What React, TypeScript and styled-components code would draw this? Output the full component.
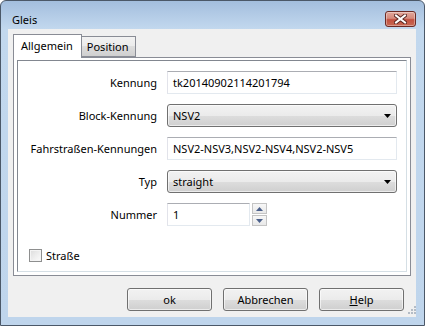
import { Fragment } from "react";
import styled, { createGlobalStyle } from "styled-components";

const GlobalStyle = createGlobalStyle`
body {
  margin: 0;
  background: #ffffff;
  font-family: "Noto Sans", "Open Sans", sans-serif;
  font-size: 11px;
  color: #000;
}
`;

const Window = styled.div`
display: flex;
flex-direction: column;
box-sizing: border-box;
width: 425px;
height: 326px;
border: 1px solid #4b5868;
border-radius: 6px 6px 0 0;
background: linear-gradient(to bottom, #a3bedd 0px, #b3cbe6 14px, #c2d8ee 28px, #bfd5ec 100%);
`;

const TitleBar = styled.div`
display: flex;
align-items: center;
justify-content: space-between;
box-sizing: border-box;
height: 28px;
padding: 9px 8px 0 11px;
`;

const Title = styled.span`
font-size: 11px;
line-height: 16px;
`;

const CloseButton = styled.div`
display: flex;
align-items: center;
justify-content: center;
box-sizing: border-box;
width: 31px;
height: 16px;
margin-top: -2px;
border: 1px solid #6c2a24;
border-radius: 3px;
background: linear-gradient(to bottom, #e2a89c 0%, #d58a7c 45%, #c2503f 55%, #c86a55 100%);
box-shadow: inset 0 0 0 1px rgba(255, 255, 255, 0.35);
`;

const Client = styled.div`
position: relative;
display: flex;
flex-direction: column;
box-sizing: border-box;
height: 288px;
margin: 0 8px 0 7px;
padding: 5px 4px 0 5px;
background: #f0f0f0;
`;

const TabStrip = styled.div`
display: flex;
align-items: flex-end;
height: 23px;
`;

const Tab = styled.div<{ $active?: boolean }>`
position: relative;
z-index: 1;
display: flex;
align-items: center;
box-sizing: border-box;
height: ${(p) => (p.$active ? "24px" : "21px")};
margin-bottom: ${(p) => (p.$active ? "-1px" : "0")};
padding: ${(p) => (p.$active ? "0 8px 2px 7px" : "0 6px 0 5px")};
border: 1px solid #898c95;
border-bottom: ${(p) => (p.$active ? "none" : "1px solid #898c95")};
border-left: ${(p) => (p.$active ? "1px solid #898c95" : "none")};
background: ${(p) =>
  p.$active ? "#ffffff" : "linear-gradient(to bottom, #f2f2f2 0%, #ebebeb 50%, #dddddd 50%, #cfcfcf 100%)"};
font-size: 11px;
`;

const TabPage = styled.div`
box-sizing: border-box;
width: 398px;
height: 219px;
padding: 2px 3px 3px 3px;
border: 1px solid #898c95;
background: #ffffff;
`;

const Group = styled.div`
box-sizing: border-box;
height: 212px;
padding: 10px 9px 0 0;
border: 1px solid;
border-color: #828790 #d5dfe5 #d5dfe5 #828790;
background: #ffffff;
`;

const Form = styled.div`
display: grid;
grid-template-columns: 139px 230px;
column-gap: 10px;
row-gap: 10px;
align-items: center;
`;

const Label = styled.label`
text-align: right;
font-size: 11px;
white-space: nowrap;
`;

const TextField = styled.div<{ $width?: number }>`
display: flex;
align-items: center;
box-sizing: border-box;
width: ${(p) => (p.$width ? `${p.$width}px` : "100%")};
height: 23px;
padding: 0 5px;
border: 1px solid;
border-color: #abadb3 #e3e9ef #e3e9ef #e2e3ea;
background: #ffffff;
font-size: 11px;
white-space: nowrap;
overflow: hidden;
`;

const Combo = styled.div`
display: flex;
align-items: center;
justify-content: space-between;
box-sizing: border-box;
height: 23px;
padding: 0 5px 0 5px;
border: 1px solid #707070;
border-radius: 3px;
background: linear-gradient(to bottom, #f2f2f2 0%, #ebebeb 50%, #dddddd 51%, #cfcfcf 100%);
box-shadow: inset 0 0 0 1px rgba(255, 255, 255, 0.6);
font-size: 11px;
`;

const SpinRow = styled.div`
display: flex;
align-items: center;
gap: 2px;
`;

const SpinButtons = styled.div`
display: flex;
flex-direction: column;
gap: 1px;
`;

const SpinButton = styled.div`
display: flex;
align-items: center;
justify-content: center;
box-sizing: border-box;
width: 15px;
height: 11px;
border: 1px solid #c4c4c4;
background: linear-gradient(to bottom, #f7f7f7 0%, #e9e9e9 100%);
`;

const CheckRow = styled.div`
display: flex;
align-items: center;
gap: 4px;
margin: 22px 0 0 11px;
font-size: 11px;
`;

const CheckBox = styled.div`
box-sizing: border-box;
width: 13px;
height: 13px;
border: 1px solid #8e8f8f;
background: linear-gradient(135deg, #dcdcdc 0%, #f0f0f0 60%, #fbfbfb 100%);
box-shadow: inset 0 0 0 1px #f4f4f4;
`;

const ButtonRow = styled.div`
display: flex;
justify-content: flex-end;
gap: 11px;
margin-top: 12px;
padding-right: 8px;
`;

const Button = styled.div`
display: flex;
align-items: center;
justify-content: center;
box-sizing: border-box;
width: 85px;
height: 23px;
border: 1px solid #707070;
border-radius: 3px;
background: linear-gradient(to bottom, #f2f2f2 0%, #ebebeb 50%, #dddddd 51%, #cfcfcf 100%);
box-shadow: inset 0 0 0 1px rgba(255, 255, 255, 0.6);
font-size: 11px;
`;

const Grip = styled.svg`
position: absolute;
right: 0;
bottom: 3px;
`;

function Arrow({ up, color }: { up?: boolean; color: string }) {
  return (
    <svg width="7" height="4" viewBox="0 0 7 4">
      <path d={up ? "M3.5 0 L7 4 L0 4 Z" : "M0 0 L7 0 L3.5 4 Z"} fill={color} />
    </svg>
  );
}

function App() {
  const rows = [
    { label: "Kennung", value: "tk20140902114201794", combo: false },
    { label: "Block-Kennung", value: "NSV2", combo: true },
    { label: "Fahrstraßen-Kennungen", value: "NSV2-NSV3,NSV2-NSV4,NSV2-NSV5", combo: false },
    { label: "Typ", value: "straight", combo: true },
  ];

  return (
    <>
      <GlobalStyle />
      <Window>
        <TitleBar>
          <Title>Gleis</Title>
          <CloseButton>
            <svg width="13" height="10" viewBox="0 0 13 10">
              <path d="M2 1.5 L11 8.5 M11 1.5 L2 8.5" stroke="#5a2620" strokeWidth="4" strokeLinecap="square" />
              <path d="M2 1.5 L11 8.5 M11 1.5 L2 8.5" stroke="#ffffff" strokeWidth="2" strokeLinecap="square" />
            </svg>
          </CloseButton>
        </TitleBar>
        <Client>
          <TabStrip>
            <Tab $active>Allgemein</Tab>
            <Tab>Position</Tab>
          </TabStrip>
          <TabPage>
            <Group>
              <Form>
                {rows.map((row) => (
                  <Fragment key={row.label}>
                    <Label>{row.label}</Label>
                    {row.combo ? (
                      <Combo>
                        {row.value}
                        <Arrow color="#000" />
                      </Combo>
                    ) : (
                      <TextField>{row.value}</TextField>
                    )}
                  </Fragment>
                ))}
                <Label>Nummer</Label>
                <SpinRow>
                  <TextField $width={83}>1</TextField>
                  <SpinButtons>
                    <SpinButton>
                      <Arrow up color="#4a5f8a" />
                    </SpinButton>
                    <SpinButton>
                      <Arrow color="#4a5f8a" />
                    </SpinButton>
                  </SpinButtons>
                </SpinRow>
              </Form>
              <CheckRow>
                <CheckBox />
                Straße
              </CheckRow>
            </Group>
          </TabPage>
          <ButtonRow>
            <Button>ok</Button>
            <Button>Abbrechen</Button>
            <Button>
              <u>H</u>elp
            </Button>
          </ButtonRow>
          <Grip width="8" height="8" viewBox="0 0 8 8">
            <rect x="6" y="0" width="2" height="2" fill="#b4bcc6" />
            <rect x="3" y="3" width="2" height="2" fill="#b4bcc6" />
            <rect x="6" y="3" width="2" height="2" fill="#b4bcc6" />
            <rect x="0" y="6" width="2" height="2" fill="#b4bcc6" />
            <rect x="3" y="6" width="2" height="2" fill="#b4bcc6" />
            <rect x="6" y="6" width="2" height="2" fill="#b4bcc6" />
          </Grip>
        </Client>
      </Window>
    </>
  );
}

export default App;
